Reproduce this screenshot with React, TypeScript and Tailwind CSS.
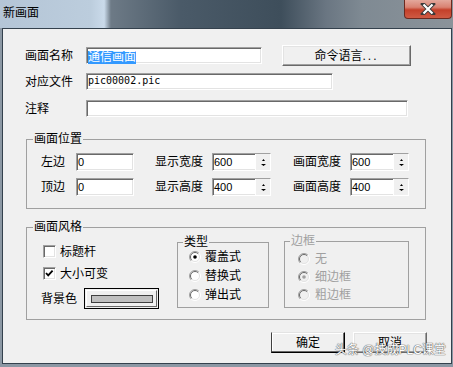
import React from "react";

const sunken =
  "bg-white border border-t-[#a0a0a0] border-l-[#a0a0a0] border-b-white border-r-white shadow-[inset_1px_1px_0_#696969,inset_-1px_-1px_0_#e3e3e3]";
const raised =
  "bg-[#f0f0f0] border border-t-white border-l-white border-b-[#696969] border-r-[#696969] shadow-[inset_-1px_-1px_0_#a0a0a0,inset_1px_1px_0_#e3e3e3]";

function Radio({ checked, disabled }: { checked?: boolean; disabled?: boolean }) {
  return (
    <svg width="12" height="12" viewBox="0 0 12 12" className="shrink-0">
      <circle cx="6" cy="6" r="5" fill={disabled ? "#f0f0f0" : "#fff"} />
      <path d="M2.1 9.9 A5.5 5.5 0 0 1 9.9 2.1" fill="none" stroke="#a0a0a0" />
      <path d="M9.9 2.1 A5.5 5.5 0 0 1 2.1 9.9" fill="none" stroke="#fff" />
      <path d="M2.8 9.2 A4.5 4.5 0 0 1 9.2 2.8" fill="none" stroke="#696969" />
      <path d="M9.2 2.8 A4.5 4.5 0 0 1 2.8 9.2" fill="none" stroke="#e3e3e3" />
      {checked && <circle cx="6" cy="6" r="1.8" fill={disabled ? "#a0a0a0" : "#000"} />}
    </svg>
  );
}

function Check({ checked, label }: { checked?: boolean; label: string }) {
  return (
    <div className="flex items-center gap-[4px] h-[13px] ml-[2px]">
      <div className={`w-[13px] h-[13px] ${sunken}`}>
        {checked && (
          <svg width="11" height="11" viewBox="0 0 11 11">
            <path d="M2 5 L4.2 7.4 L8.6 2.6" fill="none" stroke="#000" strokeWidth="1.8" />
          </svg>
        )}
      </div>
      <span className="leading-[14px]">{label}</span>
    </div>
  );
}

function Spin({ value }: { value: string }) {
  return (
    <div className={`flex w-[59px] h-[18px] ${sunken}`}>
      <span className="flex-1 pl-[1px] pt-[1px] text-[11px] leading-[14px]">{value}</span>
      <div className="w-[15px] flex flex-col bg-[#f0f0f0] border-l border-white">
        <div className="flex-1 flex items-end justify-center pb-[1px]">
          <svg width="3" height="2" viewBox="0 0 3 2">
            <path d="M1.5 0 L3 2 L0 2 Z" fill="#000" />
          </svg>
        </div>
        <div className="flex-1 flex items-start justify-center pt-[2px]">
          <svg width="5" height="2" viewBox="0 0 5 2">
            <path d="M0 0 L5 0 L2.5 2 Z" fill="#000" />
          </svg>
        </div>
      </div>
    </div>
  );
}

function Field({ label, value }: { label: string; value: string }) {
  return (
    <div className="flex items-center h-[18px]">
      <span className="w-[35px] leading-[14px]">{label}</span>
      <div className={`w-[58px] h-[18px] pl-[1px] pt-[1px] text-[11px] leading-[14px] ${sunken}`}>{value}</div>
    </div>
  );
}

export default function App() {
  return (
    <div className="relative w-[453px] h-[367px] overflow-hidden bg-[#8c98a4] text-[12px] text-black [font-family:'Liberation_Sans','Noto_Sans_CJK_SC',sans-serif]">
      {/* title bar */}
      <div className="flex justify-between h-[28px] bg-[linear-gradient(90deg,#b4c5d6_0%,#bccddd_20%,#cadaea_23%,#6d7a86_24.5%,#4a5a68_40%,#3e4e5b_62%,#6a7682_72%,#7f8a93_80%,#8b939a_100%)]">
        <span className="pl-[3px] pt-[6px] leading-[14px]">新画面</span>
        <div className="mr-[1px] w-[48px] h-[19px] rounded-b-[4px] border border-t-0 border-[#6b2a20] bg-[linear-gradient(180deg,#e3a89c_0%,#d98272_40%,#c4402a_55%,#cf5a43_100%)] flex items-center justify-center">
          <svg width="16" height="12" viewBox="0 0 16 12">
            <path d="M3 1 L13 11 M13 1 L3 11" stroke="#3a3a3a" strokeWidth="4" strokeLinecap="square" />
            <path d="M3.5 1.5 L12.5 10.5 M12.5 1.5 L3.5 10.5" stroke="#fff" strokeWidth="2.2" />
          </svg>
        </div>
      </div>

      {/* client area */}
      <div className="ml-[2px] w-[450px] h-[336px] border border-[#34414d] bg-[#f0f0f0] flex flex-col pt-[16px]">
        <div className="flex items-center h-[21px] pl-[22px]">
          <span className="w-[61px] leading-[14px]">画面名称</span>
          <div className={`w-[176px] h-[17px] pl-[1px] ${sunken}`}>
            <span className="inline-block bg-[#3399ff] text-white leading-[13px]">通信画面</span>
          </div>
          <button className={`ml-[20px] w-[129px] h-[21px] leading-[14px] ${raised}`}>
            命令语言<span className="tracking-[2px]">...</span>
          </button>
        </div>
        <div className="flex items-center h-[21px] pl-[22px] mt-[5px]">
          <span className="w-[61px] leading-[14px]">对应文件</span>
          <div className={`w-[247px] h-[17px] pl-[1px] text-[10px] leading-[14px] [font-family:'DejaVu_Sans_Mono',monospace] ${sunken}`}>
            pic00002.pic
          </div>
        </div>
        <div className="flex items-center h-[21px] pl-[22px] mt-[6px]">
          <span className="w-[61px] leading-[14px]">注释</span>
          <div className={`w-[322px] h-[17px] ${sunken}`} />
        </div>

        {/* 画面位置 */}
        <fieldset className="ml-[23px] mt-[13px] w-[400px] h-[77px] border border-[#a0a0a0] p-0">
          <legend className="ml-[6px] px-[1px] leading-[14px]">画面位置</legend>
          <div className="flex flex-col gap-[7px] pt-[7px] pl-[14px]">
            <div className="flex items-center">
              <Field label="左边" value="0" />
              <span className="ml-[21px] w-[57px] leading-[14px]">显示宽度</span>
              <Spin value="600" />
              <span className="ml-[22px] w-[57px] leading-[14px]">画面宽度</span>
              <Spin value="600" />
            </div>
            <div className="flex items-center">
              <Field label="顶边" value="0" />
              <span className="ml-[21px] w-[57px] leading-[14px]">显示高度</span>
              <Spin value="400" />
              <span className="ml-[22px] w-[57px] leading-[14px]">画面高度</span>
              <Spin value="400" />
            </div>
          </div>
        </fieldset>

        {/* 画面风格 */}
        <fieldset className="ml-[23px] mt-[11px] w-[400px] h-[100px] border border-[#a0a0a0] p-0">
          <legend className="ml-[6px] px-[1px] leading-[14px]">画面风格</legend>
          <div className="flex items-start">
            <div className="w-[150px] pl-[14px] flex flex-col">
              <div className="mt-[11px]">
                <Check label="标题杆" />
              </div>
              <div className="mt-[9px]">
                <Check checked label="大小可变" />
              </div>
              <div className="mt-[8px] flex items-center">
                <span className="w-[43px] leading-[14px]">背景色</span>
                <div className="w-[75px] h-[21px] border border-black bg-[#f0f0f0] p-[1px]">
                  <div className="w-full h-full border border-t-white border-l-white border-b-[#696969] border-r-[#696969] flex items-center justify-center">
                    <div className="w-[62px] h-[8px] border border-[#404040] bg-[#c0c0c0]" />
                  </div>
                </div>
              </div>
            </div>

            <fieldset className="mt-[1px] w-[92px] h-[73px] border border-[#a0a0a0] p-0">
              <legend className="ml-[5px] px-[1px] leading-[14px]">类型</legend>
              <div className="flex flex-col gap-[5px] pt-[1px] pl-[11px]">
                <div className="flex items-center gap-[4px] h-[14px]">
                  <Radio checked />
                  <span className="leading-[14px]">覆盖式</span>
                </div>
                <div className="flex items-center gap-[4px] h-[14px]">
                  <Radio />
                  <span className="leading-[14px]">替换式</span>
                </div>
                <div className="flex items-center gap-[4px] h-[14px]">
                  <Radio />
                  <span className="leading-[14px]">弹出式</span>
                </div>
              </div>
            </fieldset>

            <fieldset className="ml-[15px] w-[125px] h-[74px] border border-[#a0a0a0] p-0 text-[#a0a0a0]">
              <legend className="ml-[5px] px-[1px] leading-[14px]">边框</legend>
              <div className="flex flex-col gap-[4px] pt-[4px] pl-[13px]">
                <div className="flex items-center gap-[5px] h-[14px]">
                  <Radio disabled />
                  <span className="leading-[14px]">无</span>
                </div>
                <div className="flex items-center gap-[5px] h-[14px]">
                  <Radio checked disabled />
                  <span className="leading-[14px]">细边框</span>
                </div>
                <div className="flex items-center gap-[5px] h-[14px]">
                  <Radio disabled />
                  <span className="leading-[14px]">粗边框</span>
                </div>
              </div>
            </fieldset>
          </div>
        </fieldset>

        <div className="flex justify-end gap-[8px] pr-[24px] mt-[12px]">
          <button className="w-[74px] h-[21px] leading-[14px] bg-[#f0f0f0] border border-t-[#e3e3e3] border-l-[#404040] border-b-black border-r-black shadow-[inset_-1px_-1px_0_#696969,inset_1px_1px_0_#fff]">
            确定
          </button>
          <button className={`w-[74px] h-[21px] leading-[14px] ${raised}`}>取消</button>
        </div>
      </div>

      {/* watermark */}
      <div className="absolute left-[335px] top-[343px] whitespace-nowrap text-[12px] leading-[15px] text-white [text-shadow:0_0_1px_#666,0_0_1px_#666,0_0_1px_#666]">
        头条 @技成PLC课堂
      </div>
    </div>
  );
}
